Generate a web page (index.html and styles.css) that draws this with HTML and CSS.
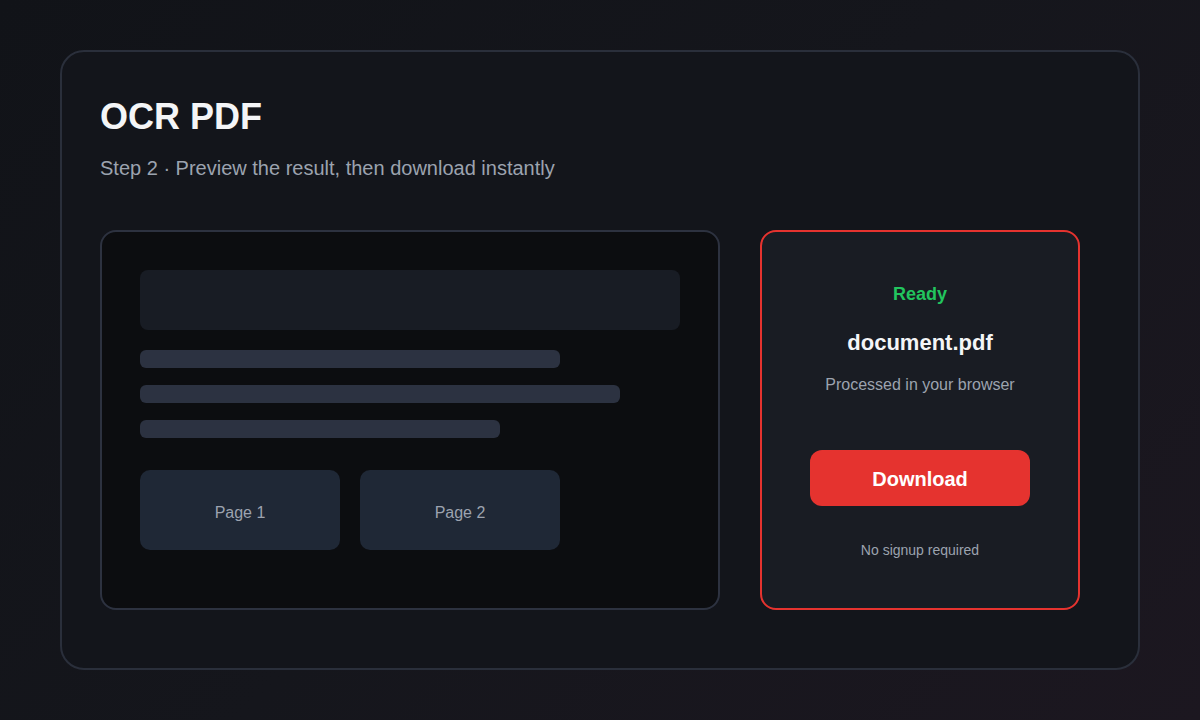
FILE: index.html
```html
<!DOCTYPE html>
<html lang="en">
<head>
<meta charset="utf-8">
<title>OCR PDF</title>
<link rel="stylesheet" href="styles.css">
</head>
<body>
<main class="card">
  <h1 class="title">OCR PDF</h1>
  <p class="subtitle">Step 2 · Preview the result, then download instantly</p>
  <div class="content">
    <section class="preview">
      <div class="block"></div>
      <div class="lines">
        <div class="line" style="width:420px"></div>
        <div class="line" style="width:480px"></div>
        <div class="line" style="width:360px"></div>
      </div>
      <div class="pages">
        <div class="page">Page 1</div>
        <div class="page">Page 2</div>
      </div>
    </section>
    <aside class="panel">
      <div class="status">Ready</div>
      <div class="filename">document.pdf</div>
      <div class="note">Processed in your browser</div>
      <button class="download">Download</button>
      <div class="small">No signup required</div>
    </aside>
  </div>
</main>
</body>
</html>
```

FILE: styles.css
```css
* { box-sizing: border-box; }
html, body { height: 100%; }
body {
  margin: 0;
  padding: 50px 60px;
  background: linear-gradient(135deg, #111318 0%, #15161c 50%, #1c1720 100%);
  font-family: "Liberation Sans", Arial, sans-serif;
  color: #f3f4f6;
}
.card {
  height: 620px;
  border: 2px solid #2a2f3b;
  border-radius: 24px;
  background: #13151b;
  padding: 43px 38px 0;
}
.title {
  margin: 0;
  font-size: 36px;
  line-height: 44px;
  font-weight: 700;
  color: #f4f5f7;
}
.subtitle {
  margin: 15px 0 0;
  font-size: 20px;
  line-height: 28px;
  color: #9ca3af;
}
.content {
  margin-top: 48px;
  display: flex;
  gap: 40px;
}
.preview {
  width: 620px;
  height: 380px;
  border: 2px solid #2d3240;
  border-radius: 16px;
  background: #0c0d10;
  padding: 38px;
}
.block {
  height: 60px;
  border-radius: 8px;
  background: #181c24;
}
.lines {
  margin-top: 20px;
  display: flex;
  flex-direction: column;
  gap: 17px;
}
.line {
  height: 18px;
  border-radius: 6px;
  background: #2c3241;
}
.pages {
  margin-top: 32px;
  display: flex;
  gap: 20px;
}
.page {
  width: 200px;
  height: 80px;
  border-radius: 10px;
  background: #1f2836;
  display: flex;
  align-items: center;
  justify-content: center;
  font-size: 16px;
  color: #9ca3af;
  padding-top: 6px;
}
.panel {
  width: 320px;
  height: 380px;
  border: 2px solid #e5332f;
  border-radius: 16px;
  background: #191c23;
  padding-top: 51px;
  display: flex;
  flex-direction: column;
  align-items: center;
  text-align: center;
}
.status {
  font-size: 18px;
  line-height: 22px;
  font-weight: 700;
  color: #22c55e;
}
.filename {
  margin-top: 24px;
  font-size: 22px;
  line-height: 28px;
  font-weight: 700;
  color: #f4f5f7;
}
.note {
  margin-top: 18px;
  font-size: 16px;
  line-height: 20px;
  color: #9ca3af;
}
.download {
  margin-top: 55px;
  width: 220px;
  height: 56px;
  border: 0;
  border-radius: 12px;
  background: #e5332f;
  color: #ffffff;
  font-family: "Liberation Sans", Arial, sans-serif;
  font-size: 20px;
  font-weight: 700;
  padding-top: 3px;
}
.small {
  margin-top: 35px;
  font-size: 14px;
  line-height: 18px;
  color: #9ca3af;
}
```
